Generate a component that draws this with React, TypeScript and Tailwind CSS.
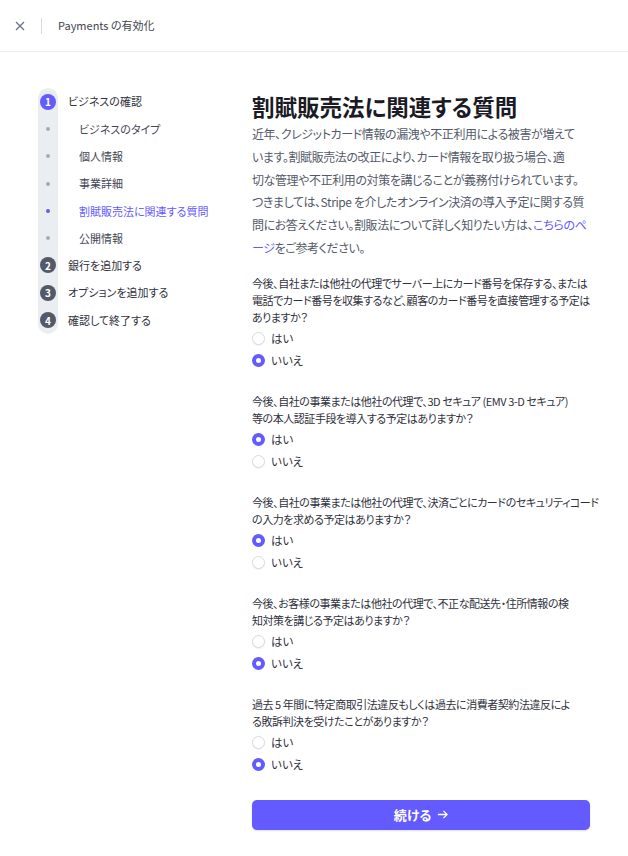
import React, { useState } from 'react';

const font = "[font-family:'Noto_Sans_CJK_JP','Noto_Sans',sans-serif] [font-feature-settings:'palt']";

type Step = { label: string; kind: 'main' | 'sub'; num?: number; active?: boolean; current?: boolean };

const steps: Step[] = [
  { label: 'ビジネスの確認', kind: 'main', num: 1, active: true },
  { label: 'ビジネスのタイプ', kind: 'sub' },
  { label: '個人情報', kind: 'sub' },
  { label: '事業詳細', kind: 'sub' },
  { label: '割賦販売法に関連する質問', kind: 'sub', current: true },
  { label: '公開情報', kind: 'sub' },
  { label: '銀行を追加する', kind: 'main', num: 2 },
  { label: 'オプションを追加する', kind: 'main', num: 3 },
  { label: '確認して終了する', kind: 'main', num: 4 },
];

const questions: { lines: string[]; answer: 'yes' | 'no' }[] = [
  {
    lines: [
      '今後、自社または他社の代理でサーバー上にカード番号を保存する、または',
      '電話でカード番号を収集するなど、顧客のカード番号を直接管理する予定は',
      'ありますか？',
    ],
    answer: 'no',
  },
  {
    lines: ['今後、自社の事業または他社の代理で、3D セキュア (EMV 3-D セキュア)', '等の本人認証手段を導入する予定はありますか？'],
    answer: 'yes',
  },
  {
    lines: ['今後、自社の事業または他社の代理で、決済ごとにカードのセキュリティコード', 'の入力を求める予定はありますか？'],
    answer: 'yes',
  },
  {
    lines: ['今後、お客様の事業または他社の代理で、不正な配送先・住所情報の検', '知対策を講じる予定はありますか？'],
    answer: 'no',
  },
  {
    lines: ['過去 5 年間に特定商取引法違反もしくは過去に消費者契約法違反によ', 'る敗訴判決を受けたことがありますか？'],
    answer: 'no',
  },
];

const Radio = ({ checked, label, onClick }: { checked: boolean; label: string; onClick: () => void }) => (
  <button onClick={onClick} className="flex h-[22px] items-center gap-[6px] text-left">
    {checked ? (
      <span className="flex h-[13px] w-[13px] items-center justify-center rounded-full bg-[#635bff]">
        <span className="h-[5px] w-[5px] rounded-full bg-white" />
      </span>
    ) : (
      <span className="h-[13px] w-[13px] rounded-full border border-[#d5dbe1] bg-white shadow-[0_1px_1px_rgba(0,0,0,0.06)]" />
    )}
    <span className="text-[11.5px] text-[#30313d]">{label}</span>
  </button>
);

const App = () => {
  const [answers, setAnswers] = useState(questions.map((q) => q.answer));

  const setAnswer = (i: number, v: 'yes' | 'no') => {
    const next = [...answers];
    next[i] = v;
    setAnswers(next);
  };

  return (
    <div className={`min-h-[856px] w-[628px] bg-white ${font}`}>
      {/* header */}
      <div className="flex h-[52px] items-center border-b border-[#ebeef1]">
        <button className="ml-[14px] flex h-[12px] w-[12px] items-center justify-center text-[#687385]">
          <svg width="10" height="10" viewBox="0 0 10 10" fill="none" stroke="currentColor" strokeWidth="1.3">
            <path d="M1 1l8 8M9 1L1 9" />
          </svg>
        </button>
        <div className="ml-[15px] h-[16px] w-px bg-[#d5dbe1]" />
        <span className="ml-[16px] text-[11px] text-[#414552]">Payments の有効化</span>
      </div>

      <div className="flex">
        {/* sidebar */}
        <div className="ml-[38px] w-[214px] pt-[36px]">
          {steps.map((s, i) => (
            <div key={i} className="flex h-[27.3px] items-center">
              <div
                className={`flex h-full w-[20px] items-center justify-center bg-[#ebeef1] ${i === 0 ? 'rounded-t-full' : ''} ${
                  i === steps.length - 1 ? 'rounded-b-full' : ''
                }`}
              >
                {s.kind === 'main' ? (
                  <span
                    className={`flex h-[16px] w-[16px] items-center justify-center rounded-full text-[10px] font-bold text-white ${
                      s.active ? 'bg-[#635bff]' : 'bg-[#545969]'
                    }`}
                  >
                    {s.num}
                  </span>
                ) : (
                  <span className={`h-[4px] w-[4px] rounded-full ${s.current ? 'bg-[#635bff]' : 'bg-[#a3acb9]'}`} />
                )}
              </div>
              <span
                className={`text-[11px] ${s.kind === 'main' ? 'ml-[10px] text-[#30313d]' : 'ml-[21px]'} ${
                  s.kind === 'sub' ? (s.current ? 'text-[#635bff]' : 'text-[#414552]') : ''
                }`}
              >
                {s.label}
              </span>
            </div>
          ))}
        </div>

        {/* main */}
        <div className="w-[338px] pt-[39px]">
          <h1 className="whitespace-nowrap text-[22.5px] font-bold leading-[30px] text-[#1a1b25]">割賦販売法に関連する質問</h1>
          <p className="mt-[2px] whitespace-nowrap text-[12px] leading-[22.8px] tracking-[-0.4px] text-[#545969]">
            近年、クレジットカード情報の漏洩や不正利用による被害が増えて
            <br />
            います。割賦販売法の改正により、カード情報を取り扱う場合、適
            <br />
            切な管理や不正利用の対策を講じることが義務付けられています。
            <br />
            つきましては、Stripe を介したオンライン決済の導入予定に関する質
            <br />
            問にお答えください。割販法について詳しく知りたい方は、<a className="text-[#635bff]">こちらのペ</a>
            <br />
            <a className="text-[#635bff]">ージ</a>をご参考ください。
          </p>

          <div className="mt-[15px] flex flex-col gap-[21px]">
            {questions.map((q, i) => (
              <div key={i}>
                <p className="whitespace-nowrap text-[11px] leading-[17px] tracking-[-0.45px] text-[#30313d]">
                  {q.lines.map((l, j) => (
                    <React.Fragment key={j}>
                      {l}
                      {j < q.lines.length - 1 && <br />}
                    </React.Fragment>
                  ))}
                </p>
                <div className="mt-[2px] flex flex-col">
                  <Radio checked={answers[i] === 'yes'} label="はい" onClick={() => setAnswer(i, 'yes')} />
                  <Radio checked={answers[i] === 'no'} label="いいえ" onClick={() => setAnswer(i, 'no')} />
                </div>
              </div>
            ))}
          </div>

          <button className="mt-[24px] flex h-[30px] w-full items-center justify-center gap-[6px] rounded-[5px] bg-[#635bff] text-[13px] font-bold text-white shadow-[0_1px_2px_rgba(0,0,0,0.12)]">
            続ける
            <svg width="11" height="11" viewBox="0 0 12 12" fill="none" stroke="currentColor" strokeWidth="1.4">
              <path d="M1 6h10M7 2l4 4-4 4" />
            </svg>
          </button>
        </div>
      </div>
    </div>
  );
};

export default App;
